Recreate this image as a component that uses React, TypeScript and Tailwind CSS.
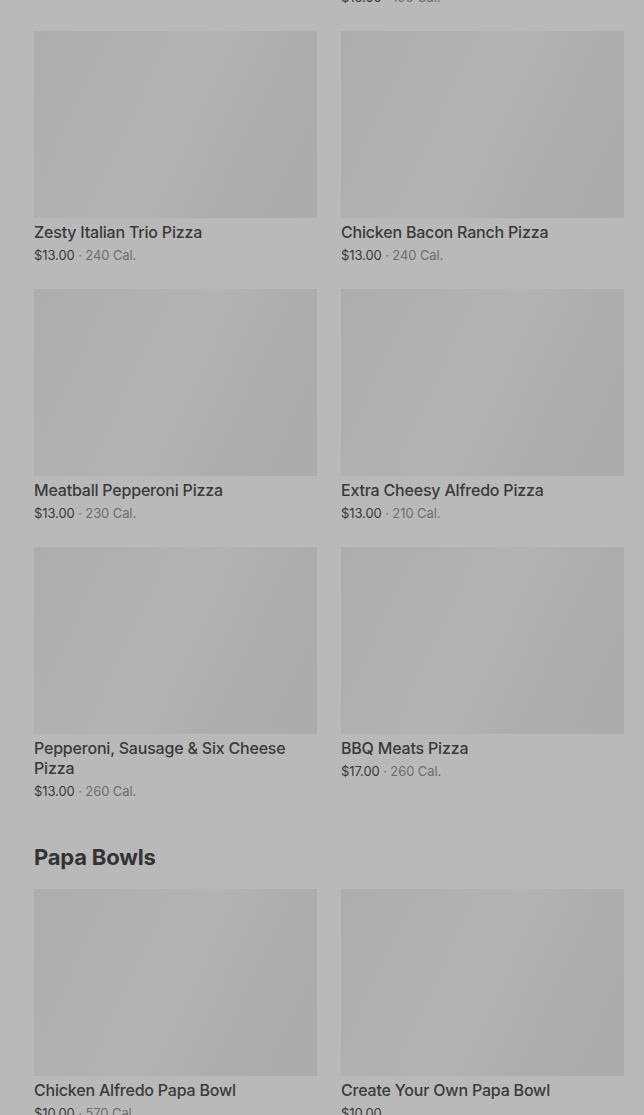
type Item = { name: string; price: string; cal?: string };

const PIZZAS: Item[] = [
  { name: "Super Hawaiian Pizza", price: "$13.00", cal: "200 Cal." },
  { name: "Spicy Italian Sausage & Pepperoni Pizza", price: "$13.00", cal: "190 Cal." },
  { name: "Zesty Italian Trio Pizza", price: "$13.00", cal: "240 Cal." },
  { name: "Chicken Bacon Ranch Pizza", price: "$13.00", cal: "240 Cal." },
  { name: "Meatball Pepperoni Pizza", price: "$13.00", cal: "230 Cal." },
  { name: "Extra Cheesy Alfredo Pizza", price: "$13.00", cal: "210 Cal." },
  { name: "Pepperoni, Sausage & Six Cheese Pizza", price: "$13.00", cal: "260 Cal." },
  { name: "BBQ Meats Pizza", price: "$17.00", cal: "260 Cal." },
];

const BOWLS: Item[] = [
  { name: "Chicken Alfredo Papa Bowl", price: "$10.00", cal: "570 Cal." },
  { name: "Create Your Own Papa Bowl", price: "$10.00" },
];

// 사진 자리 — 로딩 중 스켈레톤
function ProductCard({ item }: { item: Item }) {
  return (
    <div className="flex flex-col">
      <div className="h-[187px] w-full bg-[linear-gradient(115deg,#adadad_0%,#b0b0b0_25%,#b3b3b3_50%,#adadad_72%,#acacac_100%)]" />
      <p className="mt-1 text-[16px] font-medium leading-5 tracking-[-0.2px] text-[#3a3a3a]">
        {item.name}
      </p>
      <p className="mt-1 text-[13px] leading-[18px] tracking-[-0.1px] text-[#3a3a3a]">
        {item.price}
        {item.cal && <span className="text-[#6e6e6e]"> · {item.cal}</span>}
      </p>
    </div>
  );
}

export default function App() {
  return (
    <div
      className="h-[1115px] overflow-hidden bg-[#b9b9b9] pl-[34px] pr-[20px]"
      style={{ fontFamily: "Inter, 'Noto Sans', sans-serif" }}
    >
      <div className="-mt-[247px] grid grid-cols-2 gap-x-6 gap-y-[25px]">
        {PIZZAS.map((item) => (
          <ProductCard key={item.name} item={item} />
        ))}
      </div>
      <h2 className="mt-[43px] text-[22px] font-bold leading-7 tracking-[-0.2px] text-[#333333]">
        Papa Bowls
      </h2>
      <div className="mt-[18px] grid grid-cols-2 gap-x-6 gap-y-[25px]">
        {BOWLS.map((item) => (
          <ProductCard key={item.name} item={item} />
        ))}
      </div>
    </div>
  );
}
